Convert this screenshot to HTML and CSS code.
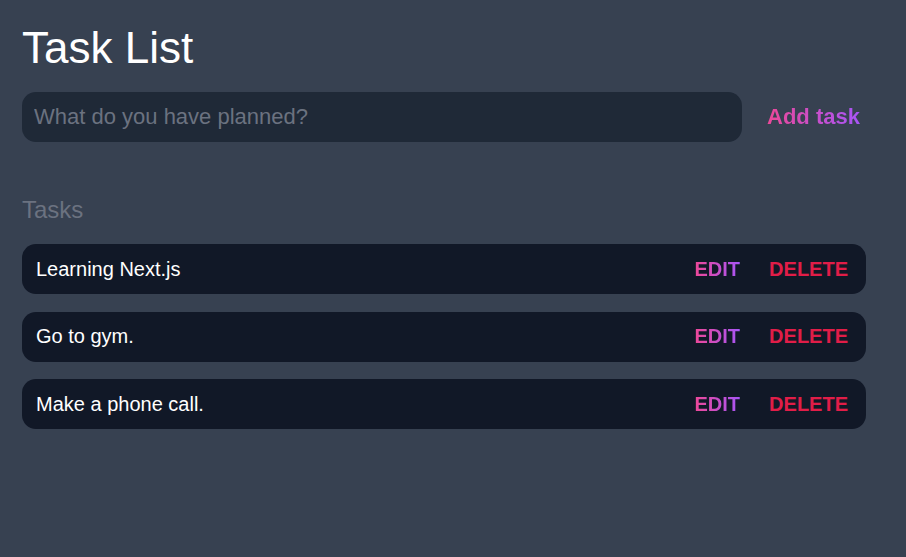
FILE: index.html
```html
<!DOCTYPE html>
<html>
<head>
<meta charset="utf-8">
<link rel="stylesheet" href="styles.css">
</head>
<body>
<main class="app">
  <h1 class="title">Task List</h1>
  <form class="add-form">
    <input class="add-input" type="text" placeholder="What do you have planned?">
    <button class="add-btn" type="button"><span class="grad">Add task</span></button>
  </form>
  <h2 class="section">Tasks</h2>
  <ul class="tasks">
    <li class="task"><span class="task-text">Learning Next.js</span><span class="actions"><button class="edit"><span class="grad">EDIT</span></button><button class="delete">DELETE</button></span></li>
    <li class="task"><span class="task-text">Go to gym.</span><span class="actions"><button class="edit"><span class="grad">EDIT</span></button><button class="delete">DELETE</button></span></li>
    <li class="task"><span class="task-text">Make a phone call.</span><span class="actions"><button class="edit"><span class="grad">EDIT</span></button><button class="delete">DELETE</button></span></li>
  </ul>
</main>
</body>
</html>
```
FILE: styles.css
```css
* { box-sizing: border-box; }
html, body { margin: 0; padding: 0; }
body {
  background: #374151;
  font-family: "Liberation Sans", Arial, sans-serif;
  color: #fff;
  width: 906px;
  height: 557px;
}
.app {
  width: 844px;
  margin-left: 22px;
  padding-top: 22px;
}
.title {
  margin: 0;
  font-size: 44px;
  font-weight: 400;
  line-height: 52px;
}
.add-form {
  display: flex;
  align-items: center;
  margin-top: 18px;
}
.add-input {
  width: 720px;
  height: 50px;
  border: none;
  outline: none;
  border-radius: 14px;
  background: #1f2937;
  color: #fff;
  font-family: inherit;
  font-size: 22px;
  padding: 0 12px;
}
.add-input::placeholder { color: #6b7280; }
.add-btn {
  background: none;
  border: none;
  font-family: inherit;
  font-size: 22px;
  font-weight: 700;
  padding: 0 0 0 25px;
  cursor: pointer;
}
.grad {
  background: linear-gradient(to right, #ec4899, #a855f7);
  -webkit-background-clip: text;
  background-clip: text;
  color: transparent;
}
.section {
  margin: 54px 0 0;
  font-size: 24px;
  font-weight: 400;
  color: #6b7280;
  line-height: 28px;
}
.tasks {
  list-style: none;
  margin: 20px 0 0;
  padding: 0;
  display: flex;
  flex-direction: column;
  gap: 17.5px;
}
.task {
  height: 50px;
  background: #111827;
  border-radius: 14px;
  display: flex;
  align-items: center;
  justify-content: space-between;
  padding: 0 18px 0 14px;
}
.task-text { font-size: 20px; }
.actions { display: flex; gap: 29px; }
.actions button {
  background: none;
  border: none;
  padding: 0;
  font-family: inherit;
  font-size: 20px;
  font-weight: 700;
  cursor: pointer;
}
.delete { color: #e11d48; }
```
